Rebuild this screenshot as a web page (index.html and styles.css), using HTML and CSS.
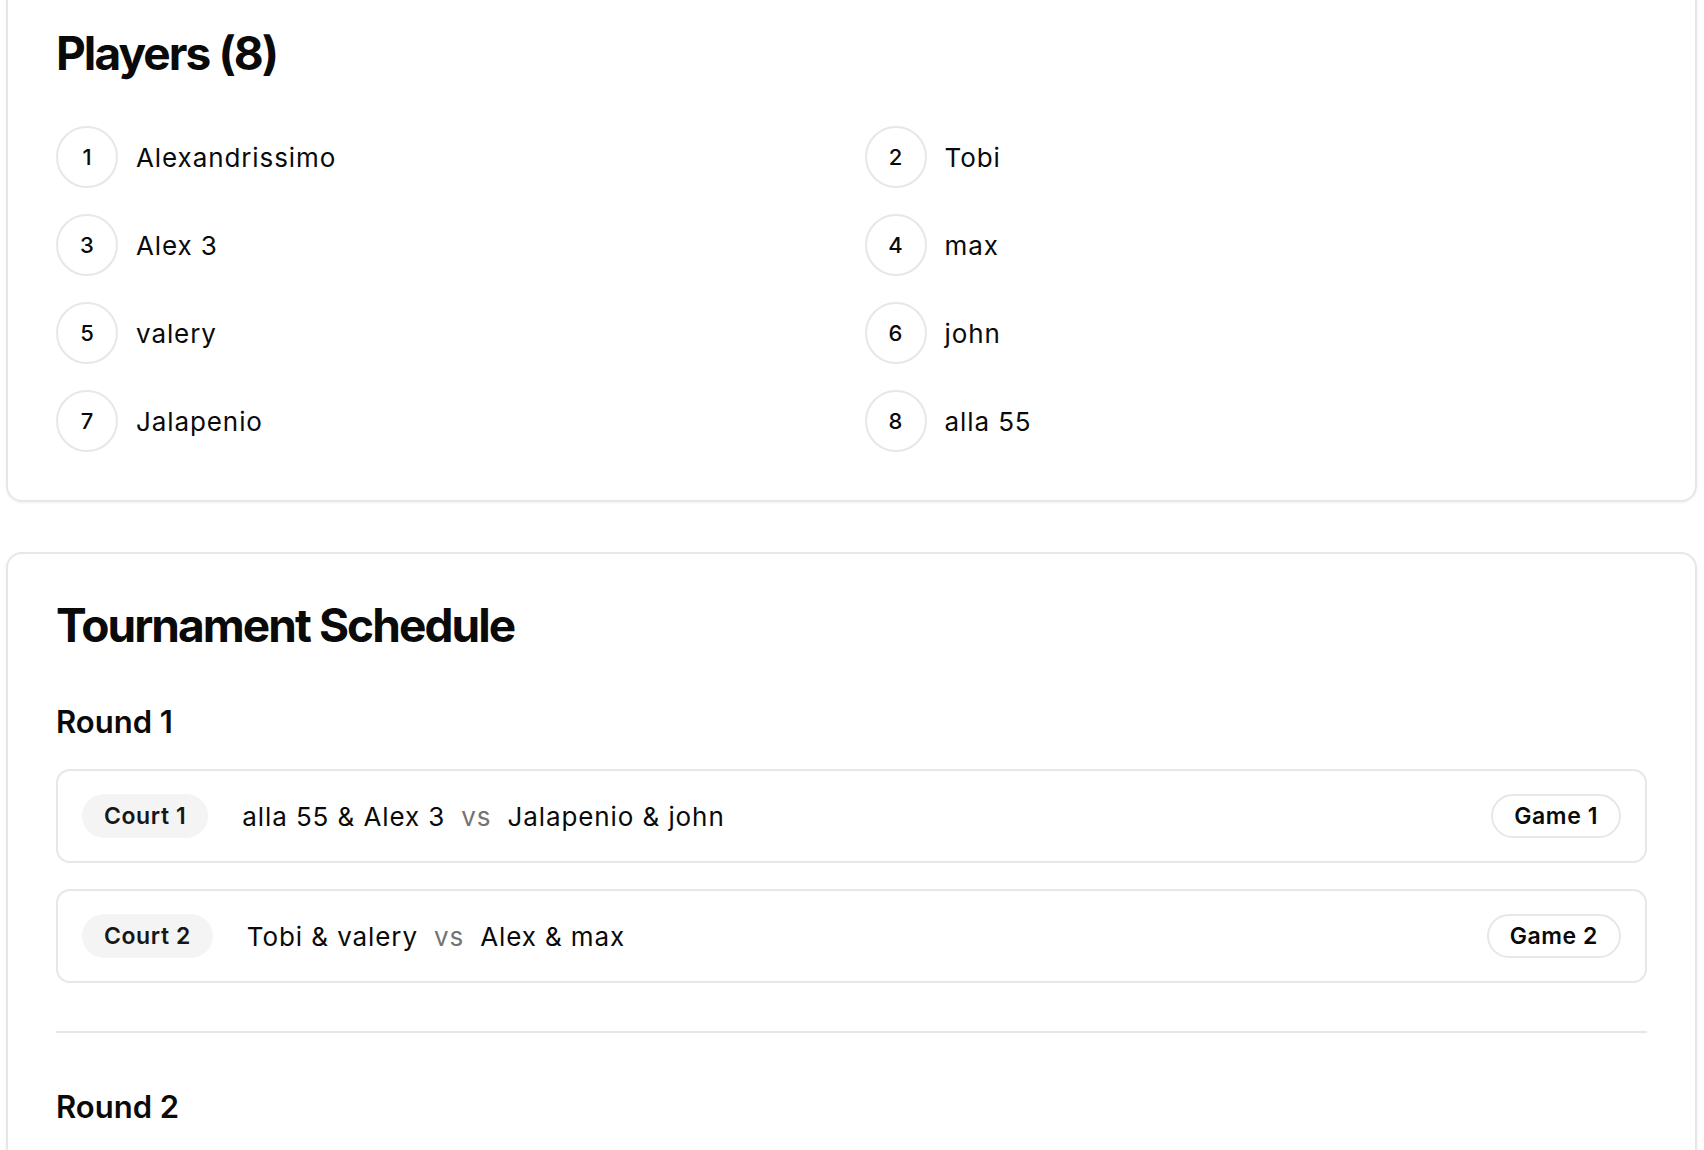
FILE: index.html
```html
<!DOCTYPE html>
<html lang="en">
<head>
<meta charset="utf-8">
<title>Tournament</title>
<link rel="stylesheet" href="styles.css">
</head>
<body>
<main class="page">
  <section class="card">
    <h1 class="card-title">Players (8)</h1>
    <ol class="players">
      <li class="player"><span class="seed">1</span><span class="name">Alexandrissimo</span></li>
      <li class="player"><span class="seed">2</span><span class="name">Tobi</span></li>
      <li class="player"><span class="seed">3</span><span class="name">Alex 3</span></li>
      <li class="player"><span class="seed">4</span><span class="name">max</span></li>
      <li class="player"><span class="seed">5</span><span class="name">valery</span></li>
      <li class="player"><span class="seed">6</span><span class="name">john</span></li>
      <li class="player"><span class="seed">7</span><span class="name">Jalapenio</span></li>
      <li class="player"><span class="seed">8</span><span class="name">alla 55</span></li>
    </ol>
  </section>

  <section class="card">
    <h1 class="card-title schedule-title">Tournament Schedule</h1>

    <div class="round">
      <h2 class="round-title">Round 1</h2>
      <div class="matches">
        <div class="match">
          <span class="court">Court 1</span>
          <div class="teams">
            <span class="team">alla 55 &amp; Alex 3</span>
            <span class="vs">vs</span>
            <span class="team">Jalapenio &amp; john</span>
          </div>
          <span class="game">Game 1</span>
        </div>
        <div class="match">
          <span class="court">Court 2</span>
          <div class="teams">
            <span class="team">Tobi &amp; valery</span>
            <span class="vs">vs</span>
            <span class="team">Alex &amp; max</span>
          </div>
          <span class="game">Game 2</span>
        </div>
      </div>
    </div>

    <div class="round">
      <h2 class="round-title">Round 2</h2>
    </div>
  </section>
</main>
</body>
</html>
```

FILE: styles.css
```css
* { box-sizing: border-box; }

html, body {
  margin: 0;
  padding: 0;
  background: #ffffff;
}

body {
  font-family: "Inter", "Noto Sans", sans-serif;
  color: #0a0a0a;
  overflow: hidden;
}

.page {
  display: flex;
  flex-direction: column;
  gap: 50px;
  padding: 0 7px 0 6px;
  margin-top: -20px;
}

.card {
  border: 2px solid #e7e7e7;
  border-radius: 16px;
  background: #ffffff;
  padding: 48px;
  box-shadow: 0 1px 3px rgba(0, 0, 0, 0.06);
}

.card-title {
  margin: 0 0 50px;
  font-size: 46px;
  line-height: 46px;
  font-weight: 700;
  letter-spacing: -0.042em;
}

.schedule-title {
  margin-bottom: 56px;
}

.players {
  list-style: none;
  margin: 0;
  padding: 0;
  display: grid;
  grid-template-columns: 1fr 1fr;
  column-gap: 26px;
  row-gap: 26px;
}

.player {
  display: flex;
  align-items: center;
  gap: 18px;
}

.seed {
  width: 62px;
  height: 62px;
  flex: none;
  border: 2px solid #e7e7e7;
  border-radius: 50%;
  display: flex;
  align-items: center;
  justify-content: center;
  font-size: 22px;
  font-weight: 500;
}

.name {
  font-size: 26px;
  font-weight: 400;
  letter-spacing: 0.035em;
}

.round {
  padding-bottom: 48px;
  border-bottom: 2px solid #e7e7e7;
  margin-bottom: 56px;
}

.round:last-child {
  border-bottom: none;
  margin-bottom: 0;
}

.round-title {
  margin: 0 0 29px;
  font-size: 31px;
  line-height: 36px;
  font-weight: 600;
  letter-spacing: 0;
}

.matches {
  display: flex;
  flex-direction: column;
  gap: 26px;
}

.match {
  display: flex;
  align-items: center;
  gap: 34px;
  border: 2px solid #e7e7e7;
  border-radius: 14px;
  padding: 23px 24px;
}

.court {
  height: 44px;
  line-height: 44px;
  padding: 0 22px;
  border-radius: 22px;
  background: #f4f4f4;
  font-size: 23px;
  font-weight: 600;
  letter-spacing: 0.025em;
  color: #171717;
}

.teams {
  flex: 1;
  display: flex;
  align-items: center;
  gap: 16px;
  font-size: 26px;
  letter-spacing: 0.035em;
}

.vs {
  color: #737373;
}

.game {
  height: 44px;
  line-height: 40px;
  padding: 0 21px;
  border: 2px solid #e7e7e7;
  border-radius: 22px;
  background: #ffffff;
  font-size: 23px;
  font-weight: 600;
  letter-spacing: 0.025em;
  color: #0a0a0a;
}
```
